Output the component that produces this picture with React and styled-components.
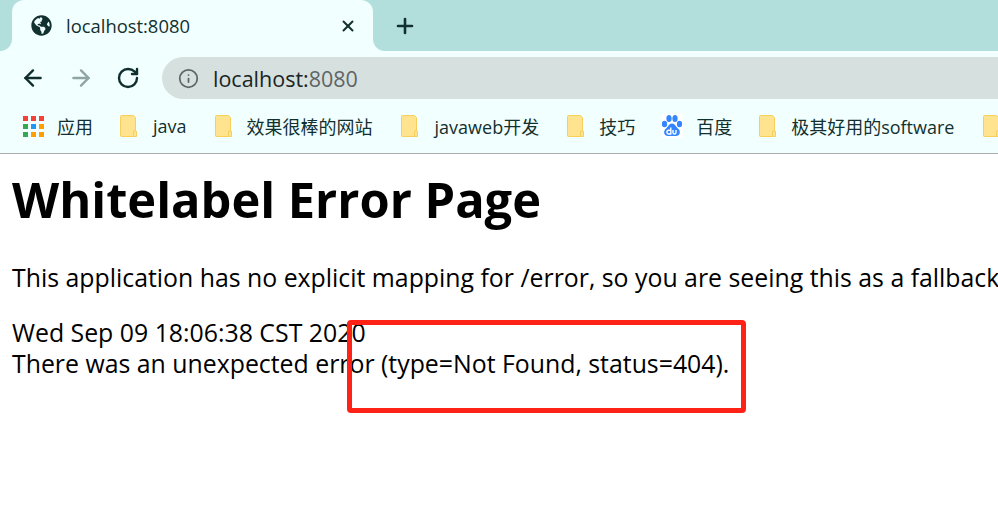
import styled, { createGlobalStyle } from 'styled-components';
import { ArrowLeft, ArrowRight, RotateCw, Info, X, Plus } from 'lucide-react';
import { FaGlobeAmericas } from 'react-icons/fa';

const GlobalStyle = createGlobalStyle`
  html, body {
    margin: 0;
    padding: 0;
    background: #fff;
    overflow: hidden;
  }
  body {
    font-family: "Open Sans", "Noto Sans CJK SC", sans-serif;
  }
`;

const Root = styled.div`
  position: relative;
  width: 998px;
  height: 510px;
  overflow: hidden;
`;

const TabStrip = styled.div`
  display: flex;
  align-items: stretch;
  height: 51px;
  padding-left: 12px;
  background: #b2dfdc;
`;

const Tab = styled.div`
  position: relative;
  display: flex;
  align-items: center;
  width: 361px;
  box-sizing: border-box;
  padding: 0 16px 0 19px;
  background: #f1fffe;
  border-radius: 12px 12px 0 0;
  color: #12302f;

  &::before,
  &::after {
    content: '';
    position: absolute;
    bottom: 0;
    width: 12px;
    height: 12px;
  }
  &::before {
    left: -12px;
    background: radial-gradient(circle at 0 0, #b2dfdc 11.5px, #f1fffe 12.5px);
  }
  &::after {
    right: -12px;
    background: radial-gradient(circle at 100% 0, #b2dfdc 11.5px, #f1fffe 12.5px);
  }
`;

const TabTitle = styled.span`
  flex: 1;
  margin-left: 14px;
  font-size: 18.4px;
  color: #12302f;
`;

const NewTab = styled.div`
  display: flex;
  align-items: center;
  margin-left: 20px;
  color: #12302f;
`;

const Toolbar = styled.div`
  display: flex;
  align-items: center;
  height: 54px;
  padding-left: 20px;
  background: #f1fffe;
`;

const NavButton = styled.div`
  display: flex;
  width: 26px;
  margin-right: ${(p) => p.$gap}px;
  color: ${(p) => (p.$off ? '#8fa5a4' : '#0f2f2e')};
`;

const AddressBar = styled.div`
  display: flex;
  flex: 1;
  align-items: center;
  height: 42px;
  margin-right: -30px;
  padding-left: 16px;
  background: #d5e0df;
  border-radius: 21px 0 0 21px;
  color: #5f6565;
`;

const Url = styled.span`
  margin-left: 14px;
  font-size: 21.5px;
  color: #5f6565;

  b {
    font-weight: 400;
    color: #1a2424;
  }
`;

const Bookmarks = styled.div`
  display: flex;
  align-items: center;
  height: 49px;
  padding: 0 0 6px 23px;
  box-sizing: border-box;
  background: #f1fffe;
  border-bottom: 1px solid #a8adac;
  white-space: nowrap;
`;

const Bookmark = styled.div`
  display: flex;
  flex-shrink: 0;
  align-items: center;
  gap: ${(p) => p.$gap || 15}px;
  margin-right: ${(p) => p.$after || 28}px;
  font-size: 18px;
  color: #12302f;
`;

const AppsGrid = styled.div`
  display: grid;
  grid-template-columns: repeat(3, 5px);
  grid-auto-rows: 5px;
  gap: 3px;
  width: 21px;
`;

const AppDot = styled.i`
  display: block;
  background: ${(p) => p.$color};
`;

const Page = styled.main`
  padding: 0 12px;
  color: #000;
  white-space: nowrap;
`;

const Heading = styled.h1`
  margin: 15px 0 33px;
  font-size: 48.8px;
  line-height: 60px;
  font-weight: 700;
`;

const Line = styled.div`
  font-size: 24.85px;
  line-height: 31px;
`;

const Paragraph = styled(Line)`
  margin-bottom: 24px;
`;

const Callout = styled.div`
  position: absolute;
  left: 347px;
  top: 320px;
  width: 399px;
  height: 93px;
  box-sizing: border-box;
  border: 5px solid #ff2216;
  border-radius: 4px;
`;

const appColors = [
  '#f44336', '#f44336', '#f44336',
  '#34a853', '#2196f3', '#ffa000',
  '#34a853', '#ffa000', '#ffa000',
];

function Folder() {
  return (
    <svg width="18" height="22" viewBox="0 0 18 22">
      <path d="M1.5 0.5H13.5L15.5 2.5V21.5H1.5A1 1 0 0 1 0.5 20.5V1.5A1 1 0 0 1 1.5 0.5Z" fill="#ffe38e" stroke="#f6cf5c" />
      <path d="M13.5 21.5V17A1.5 1.5 0 0 1 16.5 17V21.5Z" fill="#ffe38e" stroke="#f6cf5c" />
    </svg>
  );
}

function BaiduPaw() {
  return (
    <svg width="22" height="24" viewBox="0 0 22 24">
      <rect width="22" height="24" fill="#fff" />
      <g fill="#3385ff">
        <ellipse cx="3.5" cy="10" rx="2.6" ry="3.2" />
        <ellipse cx="8" cy="4.5" rx="2.6" ry="3.5" />
        <ellipse cx="14" cy="4.5" rx="2.6" ry="3.5" />
        <ellipse cx="18.5" cy="10" rx="2.6" ry="3.2" />
        <path d="M11 9.5C14 9.5 15 13 17.5 15C20 17.5 19 22 15 22H7C3 22 2 17.5 4.5 15C7 13 8 9.5 11 9.5Z" />
      </g>
      <g fill="none" stroke="#fff" strokeWidth="1.4">
        <path d="M9.8 13.5V20H7.8A1.7 1.7 0 0 1 7.8 16.2H9.8" />
        <path d="M12 16V18.6C12 20.6 15 20.6 15 18.6V16" />
      </g>
    </svg>
  );
}

export default function App() {
  return (
    <Root>
      <GlobalStyle />
      <TabStrip>
        <Tab>
          <FaGlobeAmericas size={21} />
          <TabTitle>localhost:8080</TabTitle>
          <X size={18} strokeWidth={2.6} />
        </Tab>
        <NewTab>
          <Plus size={24} strokeWidth={2.6} />
        </NewTab>
      </TabStrip>
      <Toolbar>
        <NavButton $gap={22}><ArrowLeft size={26} strokeWidth={2.2} /></NavButton>
        <NavButton $gap={22} $off><ArrowRight size={26} strokeWidth={2.2} /></NavButton>
        <NavButton $gap={20}><RotateCw size={24} strokeWidth={2.4} /></NavButton>
        <AddressBar>
          <Info size={21} strokeWidth={2} />
          <Url><b>localhost:</b>8080</Url>
        </AddressBar>
      </Toolbar>
      <Bookmarks>
        <Bookmark $gap={13} $after={27}>
          <AppsGrid>
            {appColors.map((c, i) => <AppDot key={i} $color={c} />)}
          </AppsGrid>
          应用
        </Bookmark>
        <Bookmark><Folder />java</Bookmark>
        <Bookmark $gap={14}><Folder />效果很棒的网站</Bookmark>
        <Bookmark $gap={16}><Folder />javaweb开发</Bookmark>
        <Bookmark $gap={14} $after={26}><Folder />技巧</Bookmark>
        <Bookmark $gap={13} $after={27}><BaiduPaw />百度</Bookmark>
        <Bookmark $gap={14} $after={29}><Folder />极其好用的software</Bookmark>
        <Bookmark><Folder /></Bookmark>
      </Bookmarks>
      <Page>
        <Heading>Whitelabel Error Page</Heading>
        <Paragraph>This application has no explicit mapping for /error, so you are seeing this as a fallback.</Paragraph>
        <Line>Wed Sep 09 18:06:38 CST 2020</Line>
        <Line>There was an unexpected error (type=Not Found, status=404).</Line>
      </Page>
      <Callout />
    </Root>
  );
}
